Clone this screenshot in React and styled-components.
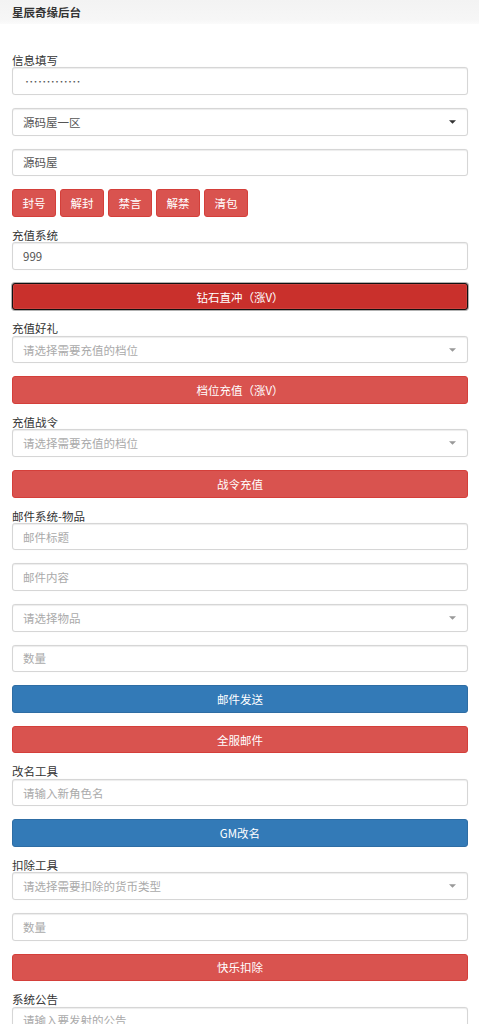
import React from "react";
import styled, { createGlobalStyle } from "styled-components";

const GlobalStyle = createGlobalStyle`
  html, body {
    margin: 0;
    padding: 0;
    background: #fff;
  }
  body {
    font-family: "Noto Sans CJK SC", "Noto Sans", "Liberation Sans", sans-serif;
    font-size: 11.5px;
    color: #333;
  }
  * {
    box-sizing: border-box;
  }
`;

const Header = styled.div`
  height: 24px;
  display: flex;
  align-items: center;
  padding-left: 12px;
  background: linear-gradient(to bottom, #f3f3f3 0%, #f6f6f6 80%, #fbfbfb 100%);
  font-weight: bold;
  font-size: 11.5px;
  color: #333;
`;

const Form = styled.div`
  padding: 31px 11px 40px 12px;
  display: flex;
  flex-direction: column;
`;

const Label = styled.label`
  display: block;
  height: 12.4px;
  line-height: 10px;
  font-size: 11.5px;
  color: #333;
`;

const Field = styled.input`
  display: block;
  width: 100%;
  height: 27.6px;
  margin: 0 0 13px;
  padding: 0 10px;
  border: 1px solid #d6d6d6;
  border-radius: 3px;
  box-shadow: inset 0 1px 1px rgba(0, 0, 0, 0.075), 0 0 1px rgba(0, 0, 0, 0.08);
  font-family: inherit;
  font-size: 11.5px;
  color: #555;
  background: #fff;
  outline: none;

  &::placeholder {
    color: #aaa;
  }
`;

const PasswordField = styled(Field)`
  font-size: 8px;
  letter-spacing: -3.7px;
  color: #555;
`;

const SelectBox = styled.div`
  display: flex;
  align-items: center;
  justify-content: space-between;
  width: 100%;
  height: 27.6px;
  margin: 0 0 13px;
  padding: 0 10px;
  border: 1px solid #d6d6d6;
  border-radius: 3px;
  box-shadow: inset 0 1px 1px rgba(0, 0, 0, 0.075), 0 0 1px rgba(0, 0, 0, 0.08);
  background: #fff;
  font-size: 11.5px;
  color: ${(p) => (p.$placeholder ? "#aaa" : "#555")};
`;

const Caret = styled.svg`
  width: 7px;
  height: 4px;
  margin-right: 1px;
  fill: ${(p) => (p.$muted ? "#999" : "#333")};
`;

const Btn = styled.button`
  display: block;
  width: 100%;
  height: 27.6px;
  margin: 0 0 13px;
  padding: 0;
  border-radius: 3px;
  border: 1px solid ${(p) => (p.$kind === "primary" ? "#2e6da4" : "#d43f3a")};
  background: ${(p) => (p.$kind === "primary" ? "#337ab7" : "#d9534f")};
  color: #fff;
  font-family: inherit;
  font-size: 11.5px;
  cursor: pointer;
`;

const ActiveBtn = styled(Btn)`
  background: #c9302c;
  border: 1px solid #111;
  box-shadow: 0 0 0 1px rgba(0, 0, 0, 0.3), inset 0 0 0 1px rgba(255, 255, 255, 0.08);
`;

const BtnRow = styled.div`
  display: flex;
  gap: 4px;
  margin: 0 0 13px;
`;

const SmallBtn = styled(Btn)`
  width: 44px;
  margin: 0;
`;

const Select = ({ value, placeholder }) => (
  <SelectBox $placeholder={!value}>
    <span>{value || placeholder}</span>
    <Caret viewBox="0 0 8 4" $muted={!value}>
      <polygon points="0,0 8,0 4,4" />
    </Caret>
  </SelectBox>
);

export default function App() {
  return (
    <>
      <GlobalStyle />
      <Header>星辰奇缘后台</Header>
      <Form>
        <Label>信息填写</Label>
        <PasswordField type="password" defaultValue="1234567890123" />
        <Select value="源码屋一区" />
        <Field defaultValue="源码屋" />
        <BtnRow>
          <SmallBtn>封号</SmallBtn>
          <SmallBtn>解封</SmallBtn>
          <SmallBtn>禁言</SmallBtn>
          <SmallBtn>解禁</SmallBtn>
          <SmallBtn>清包</SmallBtn>
        </BtnRow>

        <Label>充值系统</Label>
        <Field defaultValue="999" />
        <ActiveBtn>钻石直冲（涨V）</ActiveBtn>

        <Label>充值好礼</Label>
        <Select placeholder="请选择需要充值的档位" />
        <Btn>档位充值（涨V）</Btn>

        <Label>充值战令</Label>
        <Select placeholder="请选择需要充值的档位" />
        <Btn>战令充值</Btn>

        <Label>邮件系统-物品</Label>
        <Field placeholder="邮件标题" />
        <Field placeholder="邮件内容" />
        <Select placeholder="请选择物品" />
        <Field placeholder="数量" />
        <Btn $kind="primary">邮件发送</Btn>
        <Btn>全服邮件</Btn>

        <Label>改名工具</Label>
        <Field placeholder="请输入新角色名" />
        <Btn $kind="primary">GM改名</Btn>

        <Label>扣除工具</Label>
        <Select placeholder="请选择需要扣除的货币类型" />
        <Field placeholder="数量" />
        <Btn>快乐扣除</Btn>

        <Label>系统公告</Label>
        <Field placeholder="请输入要发射的公告" />
        <Btn $kind="primary">发送公告</Btn>
      </Form>
    </>
  );
}
